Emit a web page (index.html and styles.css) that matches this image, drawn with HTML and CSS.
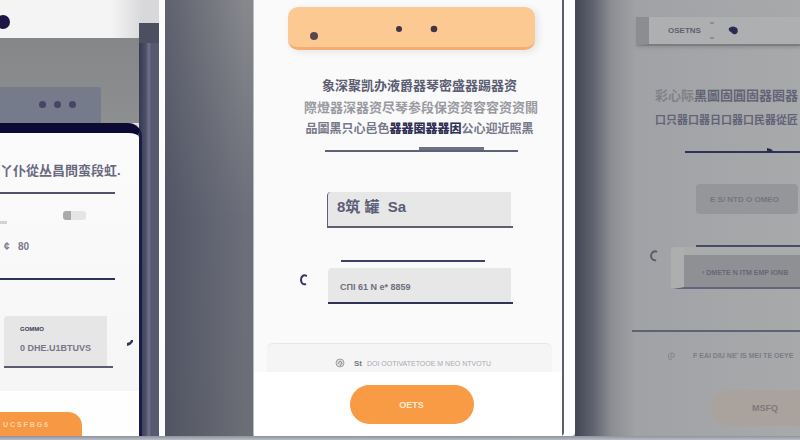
FILE: index.html
```
<!DOCTYPE html>
<html lang="zh">
<head>
    <meta charset="UTF-8">
    <meta name="viewport" content="width=device-width, initial-scale=1.0">
    <title>Forms</title>
    <link rel="stylesheet" href="styles.css">
</head>
<body>
    <main class="stage">

        <!-- Left phone -->
        <section class="left">
            <div class="left-stack">
                <div class="top-panel">
                    <svg width="10" height="14" viewBox="0 0 10 14"><circle cx="3" cy="7" r="7" fill="#1c1644"/></svg>
                </div>
                <div class="back-panel">
                    <div class="chip"><i></i><i></i><i></i></div>
                </div>
                <div class="phone">
                    <h2 class="phone-title">丫仆從丛昌問蛮段虹.</h2>
                    <div class="phone-rule"></div>
                    <div class="tags"><span class="tag-line"></span><span class="tag"></span></div>
                    <p class="phone-price">¢ &nbsp; 80</p>
                    <div class="phone-rule rule-dark"></div>
                    <div class="phone-row">
                        <div class="phone-field">
                            <label for="phoneCode">GOMMO</label>
                            <input type="text" id="phoneCode" value="0 DHE.U1BTUVS">
                        </div>
                        <svg class="pen" width="8" height="7" viewBox="0 0 8 7"><path d="M1 7 1 4 4 3 5 1 7 1 7 3 4 6Z" fill="#303456"/></svg>
                    </div>
                    <div class="phone-bottom">
                        <button class="phone-btn">U C S F B G 6</button>
                    </div>
                </div>
            </div>
            <div class="pole"></div>
        </section>

        <div class="gap"></div>

        <!-- Main form -->
        <section class="card">
            <div class="card-body">
                <div class="banner">
                    <svg width="247" height="40" viewBox="0 0 247 40">
                        <circle cx="26" cy="29" r="4" fill="#57484d"/>
                        <circle cx="111" cy="22" r="3" fill="#403447"/>
                        <circle cx="146" cy="22" r="3.3" fill="#403447"/>
                    </svg>
                </div>
                <div class="copy">
                    <h1>象深聚凯办液爵器琴密盛器踢器资</h1>
                    <p class="copy-light">際燈器深器资尽琴参段保资资容容资资關</p>
                    <p class="copy-dark">品圖黑只心邑色<b>器器圈器器因</b>公心迎<span>近照黑</span></p>
                </div>
                <div class="rule-tab"><span></span></div>
                <div class="field field-big">
                    <input type="text" aria-label="Name" value="8筑 罐 &nbsp;Sа">
                </div>
                <div class="rule-short"></div>
                <div class="field-row">
                    <svg width="7" height="12" viewBox="0 0 7 12"><path d="M7 2C3 0 1 3 1 6S3 11 6 10" fill="none" stroke="#353857" stroke-width="2"/></svg>
                    <div class="field">
                        <input type="text" aria-label="Code" value="CΠI 61 N e* 8859">
                    </div>
                </div>
                <div class="note">
                    <svg width="10" height="10" viewBox="0 0 10 10"><circle cx="5" cy="5" r="4" fill="#ddd" stroke="#a2a2a8"/><path d="M3 6 5 3 7 5 5 8" fill="none" stroke="#8d8d94"/></svg>
                    <p><b>St</b> DOI OOTIVATETOOE M NEO NTVOTU</p>
                </div>
            </div>
            <div class="card-foot">
                <button class="main-btn">OETS</button>
            </div>
        </section>

        <!-- Right form -->
        <section class="right">
            <div class="right-head">
                <b>OSETNS</b>
                <svg width="4" height="18" viewBox="0 0 4 18"><path d="M0 1H4M0 16H4" stroke="#8c8d92" stroke-width="2"/></svg>
                <svg width="11" height="9" viewBox="0 0 11 9"><path d="M1 2Q5-1 9 2 11 6 8 8 5 9 3 6 0 5 1 2Z" fill="#2a2b50"/></svg>
            </div>
            <div class="right-copy">
                <p><span>彩心际</span>黑圖固圓固器圈器</p>
                <p class="small">口只器口器日口器口民器從匠</p>
            </div>
            <div class="right-rule">
                <svg width="9" height="4" viewBox="0 0 9 4"><path d="M1 0 5 1 8 4 1 4Z" fill="#292c50"/></svg>
            </div>
            <div class="right-field">
                <input type="text" aria-label="Account" value="E S/ NTD O OMEO">
            </div>
            <div class="right-rule rule-second"></div>
            <div class="right-row">
                <svg width="8" height="12" viewBox="0 0 8 12"><path d="M7 2C4 0 1 3 1 6S4 11 6 10" fill="none" stroke="#5b5d6a" stroke-width="2"/></svg>
                <div class="right-box">
                    <input type="text" aria-label="Details" value="‹ DMETE N ITM EMP IONB">
                </div>
            </div>
            <div class="right-line"></div>
            <div class="right-note">
                <svg width="9" height="10" viewBox="0 0 9 10"><path d="M2 8Q0 3 4 2 9 2 7 6L3 6 5 3M2 9 5 8" fill="none" stroke="#85868c"/></svg>
                <p>F EAI DIU NE' IS MEI TE OEYE</p>
            </div>
            <button class="right-btn">MSFQ</button>
        </section>

    </main>
    <div class="shelf"></div>
</body>
</html>
```
FILE: styles.css
```
* {
    box-sizing: border-box;
}

body {
    margin: 0;
    min-height: 100vh;
    display: flex;
    flex-direction: column;
    overflow: hidden;
    background: #a9adb5;
    font-family: "Liberation Sans", "Noto Sans CJK SC", sans-serif;
    color: #4b4c68;
}

h1, h2, p {
    margin: 0;
}

svg {
    display: block;
    flex: none;
}

input {
    display: block;
    width: 100%;
    min-width: 0;
    padding: 0;
    border: none;
    background: none;
    color: inherit;
    font: inherit;
}

button {
    border: none;
    cursor: pointer;
    font-family: inherit;
    font-weight: bold;
}

.stage {
    flex: 1;
    display: grid;
    grid-template-columns: 165fr 88fr 322fr 225fr;
}

.shelf {
    height: 4px;
    background: linear-gradient(#8e929d, #b9bdc4);
}

/* left */
.left {
    display: flex;
    background: linear-gradient(90deg, #f4f4f4 70%, #d8d8db 90%);
    border-right: 6px solid #fcfcfd;
    min-width: 0;
}

.left-stack {
    flex: 1;
    min-width: 0;
    display: flex;
    flex-direction: column;
}

.top-panel {
    padding-top: 15px;
    height: 38px;
}

.back-panel {
    height: 85px;
    padding-top: 49px;
    background: linear-gradient(#858688, #8e8f90);
}

.chip {
    height: 36px;
    margin-right: 38px;
    padding: 14px 25px 0 0;
    display: flex;
    justify-content: flex-end;
    gap: 8px;
    background: #757b8b;
    border-top-right-radius: 3px;
}

.chip i {
    width: 7px;
    height: 7px;
    border-radius: 50%;
    background: #464566;
}

.phone {
    flex: 1;
    position: relative;
    margin-right: -3px;
    padding-top: 29px;
    border-top: 10px solid #0c0a34;
    border-right: 3px solid #191b48;
    border-radius: 0 14px 0 0;
    background: linear-gradient(#fbfbfb, #f5f5f6);
    overflow: hidden;
}

.phone-title {
    height: 18px;
    font-size: 13px;
    line-height: 18px;
    white-space: nowrap;
    color: #696a80;
}

.phone-rule {
    height: 2px;
    margin: 12px 24px 0 0;
    background: #50536b;
}

.rule-dark {
    margin-top: 24px;
    background: #2f335a;
}

.tags {
    display: flex;
    align-items: flex-end;
    gap: 56px;
    height: 30px;
}

.tag-line {
    width: 7px;
    height: 3px;
    background: #d2d2d3;
}

.tag {
    width: 23px;
    height: 9px;
    margin-bottom: 4px;
    border-radius: 3px;
    background: linear-gradient(90deg, #aaa 35%, #e5e5e5 35%);
}

.phone-price {
    margin-top: 16px;
    padding-left: 4px;
    font-size: 10px;
    line-height: 14px;
    font-weight: bold;
    color: #777889;
}

.phone-row {
    display: flex;
    align-items: center;
    gap: 13px;
    margin: 36px 5px 0 4px;
}

.phone-field {
    flex: 1;
    min-width: 0;
    padding: 7px 0 11px 16px;
    border-bottom: 2px solid #595b6e;
    border-radius: 4px 4px 0 0;
    background: linear-gradient(90deg, #e6e6e6 103px, transparent 103px);
}

.phone-field label {
    display: block;
    font-size: 6px;
    line-height: 12px;
    font-weight: bold;
    color: #38395b;
}

.phone-field input {
    height: 26px;
    margin-bottom: -6px;
    font-size: 9px;
    font-weight: bold;
    color: #777789;
}

.phone-bottom {
    margin-top: 23px;
    padding-top: 21px;
    background: #fefefe;
}

.phone-btn {
    display: block;
    width: 82px;
    height: 24px;
    padding: 0 34px 0 0;
    border-radius: 0 14px 0 0;
    background: #f79845;
    color: #ffd5a8;
    font-size: 7px;
    text-align: right;
}

.pole {
    width: 20px;
    margin-top: 23px;
    border-top: 20px solid #4b4f60;
    background: linear-gradient(90deg, #353852, #4d5169 35%, #70758a 50%, #555a70 60%, #555a70);
}

.gap {
    background: linear-gradient(90deg, rgba(55, 58, 80, 0.5), rgba(80, 82, 95, 0) 90%), linear-gradient(#86888c, #6c6f7a 50%, #6b6e75);
}

/* main card */
.card {
    display: flex;
    flex-direction: column;
    min-width: 0;
    margin-right: 11px;
    border-left: 1px solid #bbbcc0;
    border-right: 2px solid #5b5d70;
    border-radius: 0 0 4px 4px;
    background: #fafafa;
    box-shadow: 11px 0 #fdfdfe;
}

.card-body {
    padding: 7px 27px 0 34px;
}

.banner {
    height: 43px;
    border-radius: 10px;
    border-bottom: 3px solid #f5ad70;
    background: #fdc993;
    box-shadow: 3px 2px 7px #e4e4e4;
    overflow: hidden;
}

.copy {
    margin-top: 25px;
    padding-left: 16px;
    text-align: center;
    white-space: nowrap;
}

.copy h1,
.copy p {
    font-size: 13px;
    line-height: 22px;
    font-weight: bold;
    color: #5c5d73;
}

.copy .copy-light {
    color: #9999a1;
}

.copy .copy-dark {
    font-size: 12px;
    line-height: 20px;
    color: #77788a;
}

.copy-dark b {
    color: #303056;
}

.rule-tab {
    height: 5px;
    margin: 8px 17px 0 37px;
    border-bottom: 2px solid #5e6278;
}

.rule-tab span {
    display: block;
    width: 65px;
    height: 3px;
    margin-left: 94px;
    background: #6d7184;
}

.field {
    height: 36px;
    padding: 8px 12px;
    border-bottom: 2px solid #303356;
    border-radius: 4px 0 0 0;
    background: linear-gradient(90deg, #e7e7e7 183px, transparent 183px);
    font-size: 9px;
    font-weight: bold;
    color: #6e6f7d;
}

.field input {
    height: 20px;
}

.field-big {
    margin: 40px 22px 0 39px;
    padding: 3px 9px;
    border-left: 1px solid #77798a;
    border-color: #5d6072;
    font-size: 15px;
    color: #5a5c78;
}

.rule-short {
    height: 2px;
    margin: 32px 50px 0 53px;
    background: #3d4165;
}

.field-row {
    display: flex;
    align-items: center;
    gap: 21px;
    margin: 6px 22px 0 12px;
}

.field-row svg {
    margin-bottom: 12px;
}

.field-row .field {
    flex: 1;
}

.field-row .field input {
    height: 22px;
}

.note {
    height: 29px;
    margin: 39px -17px 0 -21px;
    padding-left: 68px;
    display: flex;
    align-items: center;
    gap: 9px;
    padding-top: 10px;
    border-top: 1px solid #e6e6e6;
    border-radius: 6px 6px 0 0;
    background: #f5f5f6;
    font-size: 7px;
    white-space: nowrap;
    color: #a9a9b0;
}

.note b {
    margin-right: 3px;
    font-size: 8px;
    color: #777;
}

.card-foot {
    flex: 1;
    padding-top: 13px;
    text-align: center;
    background: #fff;
}

.main-btn {
    width: 124px;
    height: 39px;
    margin-left: 7px;
    border-radius: 20px;
    background: #f99a45;
    color: #ffecd6;
    font-size: 9px;
}

/* right */
.right {
    min-width: 0;
    padding-top: 17px;
    overflow: hidden;
    background: linear-gradient(90deg, #424655, #60636e 8%, #8b8d93 16%, #a1a2a5 27%, #a8a9ab);
    white-space: nowrap;
}

.right-head {
    height: 29px;
    margin-left: 61px;
    padding-left: 19px;
    display: flex;
    align-items: center;
    gap: 9px;
    border-left: 13px solid #8c8d90;
    border-bottom: 2px solid #7c7d80;
    background: #aeafb0;
    box-shadow: 0 2px 3px #929396;
    font-size: 8px;
    color: #606170;
}

.right-head svg:last-child {
    margin-left: 5px;
}

.right-copy {
    margin: 38px 0 0 80px;
    font-size: 13px;
    font-weight: bold;
    color: #626377;
}

.right-copy p {
    line-height: 24px;
}

.right-copy span {
    color: #808189;
}

.right-copy .small {
    font-size: 11px;
}

.right-rule {
    height: 5px;
    margin: 16px 0 0 110px;
    padding-left: 81px;
    border-bottom: 2px solid #2f3258;
}

.right-field {
    margin: 31px 2px 0 121px;
    height: 30px;
    padding: 5px 14px;
    border-radius: 4px;
    background: #959699;
    font-size: 8px;
    font-weight: bold;
    color: #74757e;
}

.right-field input {
    height: 20px;
}

.rule-second {
    margin: 28px 0 0 121px;
    border-color: #474c65;
}

.right-row {
    display: flex;
    gap: 13px;
    margin-left: 75px;
}

.right-row svg {
    margin-top: 3px;
}

.right-box {
    flex: 1;
    min-width: 0;
    height: 42px;
    padding: 14px 0 0 18px;
    border-left: 13px solid #adaeae;
    border-bottom: 2px solid #62667a;
    border-radius: 4px 0 0 4px;
    background: linear-gradient(#aaabac 8px, #8f9093 8px);
    font-size: 7px;
    font-weight: bold;
    color: #666778;
}

.right-box input {
    height: 22px;
}

.right-line {
    height: 2px;
    margin: 41px 0 0 57px;
    background: #5d6373;
}

.right-note {
    display: flex;
    align-items: center;
    gap: 17px;
    margin: 19px 0 0 92px;
    font-size: 7px;
    line-height: 10px;
    font-weight: bold;
    color: #7b7c84;
}

.right-btn {
    display: block;
    width: 108px;
    height: 36px;
    margin: 29px 0 0 136px;
    border-radius: 18px;
    background: #aaa29d;
    color: #7d7a7b;
    font-size: 9px;
}
```
